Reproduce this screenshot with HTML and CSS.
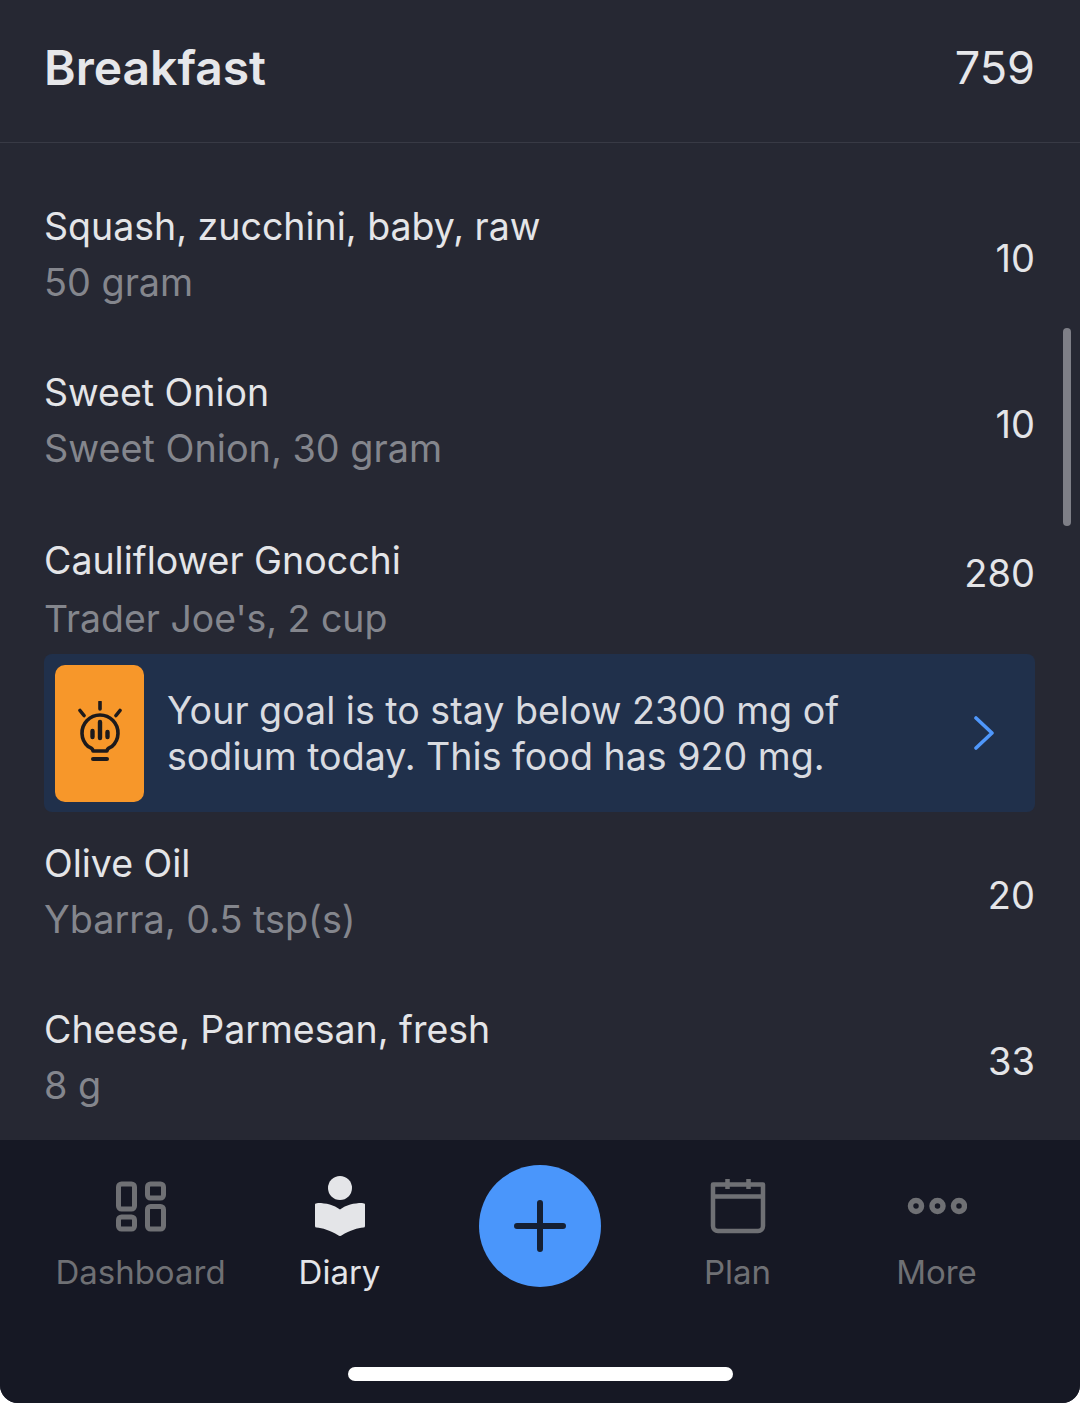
FILE: index.html
```html
<!DOCTYPE html>
<html lang="en">
<head>
  <meta charset="UTF-8" />
  <meta name="viewport" content="width=device-width, initial-scale=1.0" />
  <title>Diary</title>
  <link rel="stylesheet" href="styles.css">
</head>
<body>
  <div class="screen">
    <header class="meal-header">
      <h1 class="meal-title">Breakfast</h1>
      <span class="meal-total">759</span>
    </header>

    <main class="food-list">
      <div class="scrollbar"></div>

      <div class="food-row">
        <div class="food-text">
          <div class="food-name">Squash, zucchini, baby, raw</div>
          <div class="food-detail">50 gram</div>
        </div>
        <div class="food-cals">10</div>
      </div>

      <div class="food-row">
        <div class="food-text">
          <div class="food-name">Sweet Onion</div>
          <div class="food-detail">Sweet Onion, 30 gram</div>
        </div>
        <div class="food-cals">10</div>
      </div>

      <div class="food-row food-row-tip">
        <div>
          <div class="food-name">Cauliflower Gnocchi</div>
          <div class="food-detail">Trader Joe's, 2 cup</div>
        </div>
        <div class="food-cals">280</div>
      </div>

      <div class="tip">
        <div class="tip-icon">
          <svg width="44" height="64" viewBox="0 0 44 64" fill="none" stroke="#1d1a1c" stroke-width="3.6" stroke-linecap="round">
            <path d="M22 1v7M2 9.500l4 5M42 9.500l-4 5" />
            <path d="M15 50c0-3-2-3-5-4.600A18 18 0 1 1 34 45.400c-3 1.600-5 1.600-5 4.600z" stroke-linejoin="round" />
            <path d="M15 58h14" stroke-width="4" />
            <path d="M22 21v16M14.500 30v6M29.500 31v5" stroke-width="4.400" />
          </svg>
        </div>
        <div class="tip-text">Your goal is to stay below 2300 mg of<br>sodium today. This food has 920 mg.</div>
        <svg class="tip-arrow" width="22" height="34" viewBox="0 0 22 34" fill="none" stroke="#4f97fb" stroke-width="3.600" stroke-linecap="round" stroke-linejoin="round">
          <path d="M3 2l16 15L3 32" />
        </svg>
      </div>

      <div class="food-row">
        <div class="food-text">
          <div class="food-name">Olive Oil</div>
          <div class="food-detail">Ybarra, 0.5 tsp(s)</div>
        </div>
        <div class="food-cals">20</div>
      </div>

      <div class="food-row">
        <div class="food-text">
          <div class="food-name">Cheese, Parmesan, fresh</div>
          <div class="food-detail">8 g</div>
        </div>
        <div class="food-cals">33</div>
      </div>
    </main>

    <nav class="tabbar">
      <div class="tabs">
        <div class="tab">
          <svg class="tab-icon" width="52" height="52" viewBox="0 0 52 52" fill="none" stroke="#6f7074" stroke-width="5">
            <rect x="3.500" y="4" width="16" height="25" rx="3" />
            <rect x="32.500" y="4" width="16" height="14" rx="3" />
            <rect x="3.500" y="37" width="16" height="12" rx="3" />
            <rect x="32.500" y="26.500" width="16" height="22.500" rx="3" />
          </svg>
          <span class="tab-label">Dashboard</span>
        </div>
        <div class="tab tab-active">
          <svg class="tab-icon" width="52" height="60" viewBox="0 0 52 60" fill="#e4e5e8">
            <circle cx="26" cy="12" r="12" />
            <path d="M2 27.500l2-.5c8 0 16 2 22 6.500 6-4.500 14-6.500 22-6.500l2 .5a1 1 0 0 1 1 1V50a1.500 1.500 0 0 1-1.500 1.500c-6 .5-13 2.500-22 8-1 .7-2 .7-3 0-9-5.500-16-7.500-22-8A1.500 1.500 0 0 1 1 50V28.500a1 1 0 0 1 1-1z" />
          </svg>
          <span class="tab-label">Diary</span>
        </div>
        <div class="tab tab-add">
          <button class="add-btn" aria-label="Add">
            <svg width="52" height="52" viewBox="0 0 52 52" fill="none" stroke="#152033" stroke-width="6" stroke-linecap="round">
              <path d="M26 3v46M3 26h46" />
            </svg>
          </button>
        </div>
        <div class="tab">
          <svg class="tab-icon" width="56" height="56" viewBox="0 0 56 56" fill="none" stroke="#6f7074" stroke-width="4.500" stroke-linejoin="round">
            <path d="M3 6.500h50V48a5 5 0 0 1-5 5H8a5 5 0 0 1-5-5z" />
            <path d="M3 18.500h50" />
            <path d="M17.500 1v10M38.500 1v10" />
          </svg>
          <span class="tab-label">Plan</span>
        </div>
        <div class="tab">
          <svg class="tab-icon" width="60" height="52" viewBox="0 0 60 52" fill="none" stroke="#6f7074" stroke-width="5.500">
            <circle cx="9" cy="26" r="5.500" />
            <circle cx="30.500" cy="26" r="5.500" />
            <circle cx="52" cy="26" r="5.500" />
          </svg>
          <span class="tab-label">More</span>
        </div>
      </div>
      <div class="home-indicator"></div>
    </nav>
  </div>
</body>
</html>
```

FILE: styles.css
```css
* {
  box-sizing: border-box;
}

body {
  margin: 0;
  background-color: #ffffff;
  font-family: Inter, "Liberation Sans", sans-serif;
}

.screen {
  width: 1080px;
  height: 1403px;
  display: flex;
  flex-direction: column;
  overflow: hidden;
  background-color: #262833;
  border-radius: 0 0 18px 18px;
}

.meal-header {
  display: flex;
  justify-content: space-between;
  align-items: center;
  height: 143px;
  padding: 0 45px 7px 44px;
  border-bottom: 1px solid #383a45;
  flex-shrink: 0;
}

.meal-title {
  margin: 0;
  font-size: 48px;
  font-weight: 600;
  color: #e6e7ea;
}

.meal-total {
  font-size: 45px;
  color: #e6e7ea;
}

.food-list {
  position: relative;
  flex: 1;
  overflow: hidden;
  padding: 32px 45px 0 44px;
}

.scrollbar {
  position: absolute;
  top: 185px;
  right: 9px;
  width: 8px;
  height: 198px;
  border-radius: 4px;
  background-color: #7e7f87;
}

.food-row {
  display: flex;
  justify-content: space-between;
  align-items: center;
  height: 166px;
}

.food-text {
  margin-bottom: 8px;
}

.food-row-tip {
  height: 147px;
  align-items: flex-start;
  padding-top: 26px;
}

.food-name {
  font-size: 37.500px;
  line-height: 56px;
  color: #e4e5e8;
}

.food-detail {
  margin-top: -1px;
  font-size: 37.800px;
  line-height: 56px;
  color: #84868d;
}

.food-row-tip .food-detail {
  margin-top: 2px;
  font-size: 37.400px;
}

.food-cals {
  font-size: 38px;
  color: #e4e5e8;
}

.food-row-tip .food-cals {
  margin-top: 17px;
}

.tip {
  display: flex;
  align-items: center;
  height: 158px;
  padding: 11px 40px 11px 11px;
  border-radius: 8px;
  background-color: #20304b;
}

.tip-icon {
  display: flex;
  justify-content: center;
  align-items: center;
  width: 89px;
  height: 137px;
  border-radius: 10px;
  background-color: #f7972a;
  flex-shrink: 0;
}

.tip-text {
  flex: 1;
  margin: 2px 0 0 23px;
  font-size: 37.600px;
  line-height: 46px;
  color: #d9dbe0;
}

.tabbar {
  height: 263px;
  flex-shrink: 0;
  padding: 25px 41px 0;
  background-color: #161824;
  position: relative;
}

.tabs {
  display: grid;
  grid-template-columns: repeat(5, 199px);
}

.tab {
  display: flex;
  flex-direction: column;
  align-items: center;
  color: #6f7074;
}

.tab-add {
  padding-left: 2px;
}

.tab-icon {
  height: 60px;
  margin-top: 11px;
}

.tab-label {
  margin-top: 14px;
  font-size: 33px;
  line-height: 44px;
}

.tab-active {
  color: #e4e5e8;
}

.add-btn {
  display: flex;
  justify-content: center;
  align-items: center;
  width: 122px;
  height: 122px;
  padding: 0;
  border: none;
  border-radius: 50%;
  background-color: #4a96fb;
}

.home-indicator {
  position: absolute;
  left: 348px;
  bottom: 22px;
  width: 385px;
  height: 14px;
  border-radius: 7px;
  background-color: #ffffff;
}
```
